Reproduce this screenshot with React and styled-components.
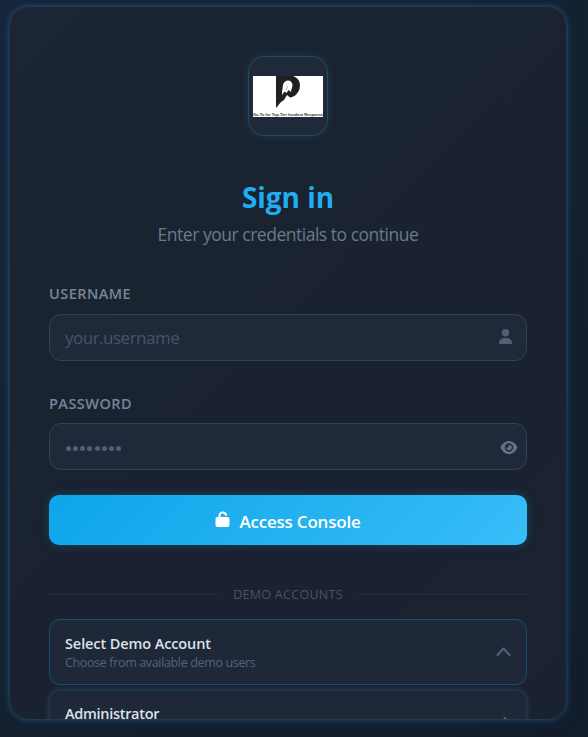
import React from 'react';
import styled, { createGlobalStyle } from 'styled-components';
import { FaEye, FaUser } from 'react-icons/fa6';

const Global = createGlobalStyle`
  * { box-sizing: border-box; }
  html, body { margin: 0; height: 737px; overflow: hidden; }
  body { background: linear-gradient(135deg, #17253a 0%, #14212f 50%, #131c2c 100%); font-family: "Open Sans", "Noto Sans", sans-serif; }
`;
const Page = styled.main`
  height: 737px;
  padding: 6px 21px 17px 9px;
`;
const Card = styled.section`
  height: 714px;
  width: 558px;
  padding: 49px 39px 0;
  border: 1px solid #2c3748;
  border-radius: 20px;
  background: linear-gradient(135deg, #1b2535, #1a2330 30%, #1a2232 60%, #1b222f);
  box-shadow: 0 0 5px rgba(28, 105, 155, .65), 0 0 18px rgba(28, 95, 140, .15);
  overflow: hidden;
`;
const LogoBox = styled.div`
  width: 80px;
  height: 80px;
  margin: 0 auto;
  display: flex;
  align-items: center;
  justify-content: center;
  border: 1px solid #29465d;
  border-radius: 16px;
  background: #1e293a;
  box-shadow: 0 0 8px rgba(30, 110, 155, .3);
`;
const Text = styled.span`
  display: block;
  white-space: nowrap;
  color: ${p => p.$color};
  font-size: ${p => p.$size}px;
  line-height: ${p => p.$line}px;
  font-weight: ${p => p.$weight || 400};
  letter-spacing: ${p => p.$track || 0}px;
`;
const Heading = styled.header`
  margin-top: 41px;
  display: flex;
  flex-direction: column;
  align-items: center;
`;
const Field = styled.label`
  display: block;
  margin-top: ${p => p.$top}px;
`;
const Input = styled.div`
  height: 47px;
  margin-top: ${p => p.$top}px;
  padding: 0 ${p => p.$end}px 0 15px;
  display: flex;
  align-items: center;
  justify-content: space-between;
  border: 1px solid #334153;
  border-radius: 12px;
  background: #1e2939;
  color: #536074;
`;
const UserIcon = styled(FaUser)`
  width: 15px;
  height: 15px;
  margin-bottom: 2px;
`;
const EyeIcon = styled(FaEye)`
  width: 18px;
  height: 15px;
  margin-top: 2px;
  color: #657286;
`;
const Dots = styled.span`
  display: flex;
  gap: 2px;
  padding: 3px 0 0 1px;
  i { width: 5px; height: 5px; margin-right: .15px; border-radius: 50%; background: #536074; }
`;
const Button = styled.button`
  width: 100%;
  height: 50px;
  margin-top: 25px;
  padding: 4px 0 0;
  display: flex;
  align-items: center;
  justify-content: center;
  gap: 9px;
  border: 0;
  border-radius: 10px;
  background: linear-gradient(135deg, #0ea5e9, #38bdf8);
  box-shadow: 0 0 8px rgba(30, 140, 195, .35);
  font-family: inherit;
  svg { margin-bottom: 6px; }
`;
const Divider = styled.div`
  display: flex;
  align-items: center;
  gap: 15px;
  height: 20px;
  margin: 39px 0 15px;
  &::before, &::after { content: ""; flex: 1; height: 1px; background: #262f40; }
  span { padding-top: 2px; }
`;
const Option = styled.div`
  height: 66px;
  margin-bottom: 5px;
  padding: ${p => p.$active ? 15 : 14}px 15px 0;
  display: flex;
  justify-content: space-between;
  border: 1px solid ${p => p.$active ? '#1b4f70' : '#2d3849'};
  border-radius: 11px;
  background: #1e2839;
  box-shadow: ${p => p.$active ? 'none' : '0 0 6px rgba(28, 95, 140, .55)'};
`;

export default function App() {
  return (
    <Page>
      <Global />
      <Card>
        <LogoBox>
          <svg width="70" height="41" viewBox="0 0 70 41">
            <rect width="70" height="41" fill="#fff" />
            <path d="M23 0H40C46 2 48 7 46.500 13C45 18 41 21 37 21.500L34 19L31 24L28 26L23 32Z" fill="#202024" />
            <path d="M29 16L30 9C31 4 37 3 39 7C40.500 10 38 13 38 16L35.500 14L33.500 17L31.500 15.500L29 19Z" fill="#fff" />
            <path d="M34.500 10L33 14" stroke="#777" strokeWidth=".6" />
            <text x="0" y="40.300" textLength="70" lengthAdjust="spacingAndGlyphs" fontFamily="Liberation Sans" fontWeight="700" fontSize="4" fill="#333">Go-To for Top-Tier Incident Response</text>
          </svg>
        </LogoBox>
        <Heading>
          <Text $size={28} $line={40} $weight={700} $color="#20aef3" $track={-.05}>Sign in</Text>
          <Text $size={17.500} $line={34} $color="#6c798c" $track={-.48}>Enter your credentials to continue</Text>
        </Heading>
        <Field $top={33}>
          <Text $size={14.500} $line={20} $weight={600} $color="#77859a" $track={.45}>USERNAME</Text>
          <Input $top={10} $end={13}>
            <Text $size={17} $line={26} $color="#475467" $track={-.5}>your.username</Text>
            <UserIcon />
          </Input>
        </Field>
        <Field $top={33}>
          <Text $size={14.500} $line={20} $weight={600} $color="#77859a" $track={.45}>PASSWORD</Text>
          <Input $top={9} $end={8}>
            <Dots>{Array.from({ length: 8 }, (_, i) => <i key={i} />)}</Dots>
            <EyeIcon />
          </Input>
        </Field>
        <Button>
          <svg width="15" height="16" viewBox="0 0 15 16" fill="none">
            <rect x=".5" y="6" width="14" height="10" rx="2" fill="#fff" />
            <path d="M4.500 7V4.500A3.300 3.300 0 0 1 11 4" stroke="#fff" strokeWidth="2" strokeLinecap="round" />
          </svg>
          <Text $size={17} $line={24} $weight={600} $color="#fff" $track={-.2}>Access Console</Text>
        </Button>
        <Divider><Text $size={12.500} $line={18} $color="#475467" $track={.3}>DEMO ACCOUNTS</Text></Divider>
        <Option $active>
          <div>
            <Text $size={14.500} $line={18} $weight={600} $color="#dce2e9" $track={-.1}>Select Demo Account</Text>
            <Text $size={12.500} $line={20} $color="#566376" $track={-.35}>Choose from available demo users</Text>
          </div>
          <svg width="16" height="32" viewBox="0 0 16 32" fill="none" stroke="#566376" strokeWidth="2" strokeLinecap="round" strokeLinejoin="round"><path d="M2.500 20L8.500 13.500L14.500 20" /></svg>
        </Option>
        <Option>
          <Text $size={14.500} $line={18} $weight={600} $color="#dce2e9" $track={-.3}>Administrator</Text>
          <svg width="16" height="32" viewBox="0 0 16 32" fill="none" stroke="#566376" strokeWidth="2" strokeLinecap="round" strokeLinejoin="round"><path d="M9.500 13L15 19L9.500 25" /></svg>
        </Option>
      </Card>
    </Page>
  );
}
